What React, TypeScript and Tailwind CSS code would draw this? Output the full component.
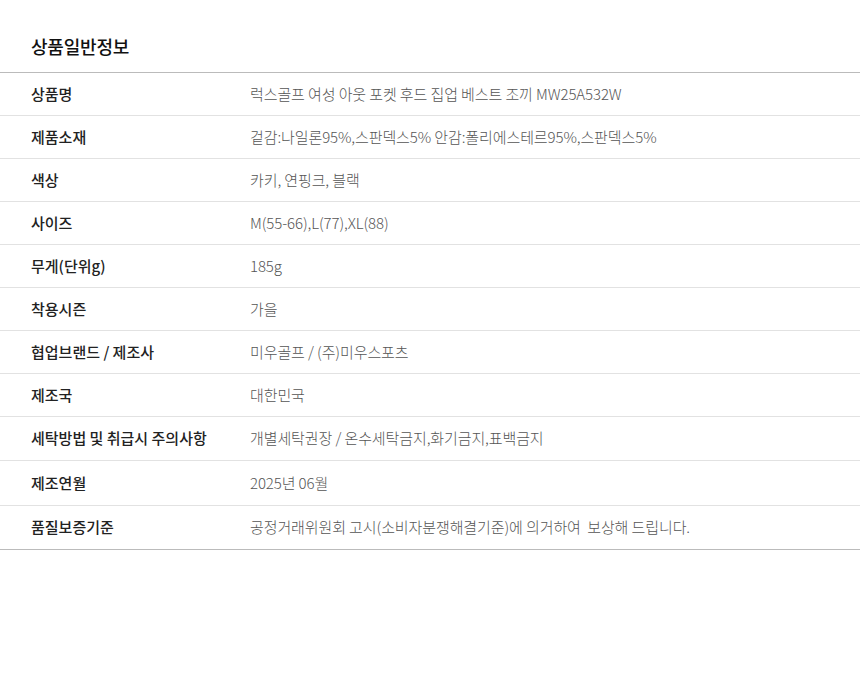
const rows: { label: string; value: string; h: string }[] = [
  { label: "상품명", value: "럭스골프 여성 아웃 포켓 후드 집업 베스트 조끼 MW25A532W", h: "h-[43px]" },
  { label: "제품소재", value: "겉감:나일론95%,스판덱스5% 안감:폴리에스테르95%,스판덱스5%", h: "h-[43px]" },
  { label: "색상", value: "카키, 연핑크, 블랙", h: "h-[43px]" },
  { label: "사이즈", value: "M(55-66),L(77),XL(88)", h: "h-[43px]" },
  { label: "무게(단위g)", value: "185g", h: "h-[43px]" },
  { label: "착용시즌", value: "가을", h: "h-[43px]" },
  { label: "협업브랜드 / 제조사", value: "미우골프 / (주)미우스포츠", h: "h-[43px]" },
  { label: "제조국", value: "대한민국", h: "h-[43px]" },
  { label: "세탁방법 및 취급시 주의사항", value: "개별세탁권장 / 온수세탁금지,화기금지,표백금지", h: "h-[44px]" },
  { label: "제조연월", value: "2025년 06월", h: "h-[45px]" },
  { label: "품질보증기준", value: "공정거래위원회 고시(소비자분쟁해결기준)에 의거하여  보상해 드립니다.", h: "h-[44px]" },
];

export default function App() {
  return (
    <div
      className="w-[860px] h-[700px] bg-white"
      style={{ fontFamily: '"Noto Sans CJK KR", "Noto Sans", sans-serif' }}
    >
      <div className="h-[72px] flex items-center pl-[31px] pt-[21px]">
        <h2 className="text-[18px] font-medium text-[#111] tracking-[-0.2px]">상품일반정보</h2>
      </div>
      <div className="border-t border-[#bbbbbb]">
        {rows.map((r, i) => (
          <div
            key={r.label}
            className={`${r.h} flex items-center border-b ${
              i === rows.length - 1 ? "border-[#bbbbbb]" : "border-[#e2e2e2]"
            }`}
          >
            <div className="w-[250px] shrink-0 pl-[31px] text-[15px] font-medium text-[#222]">
              {r.label}
            </div>
            <div className="text-[15px] font-light text-[#555] tracking-[-0.1px] whitespace-pre">
              {r.value}
            </div>
          </div>
        ))}
      </div>
    </div>
  );
}
